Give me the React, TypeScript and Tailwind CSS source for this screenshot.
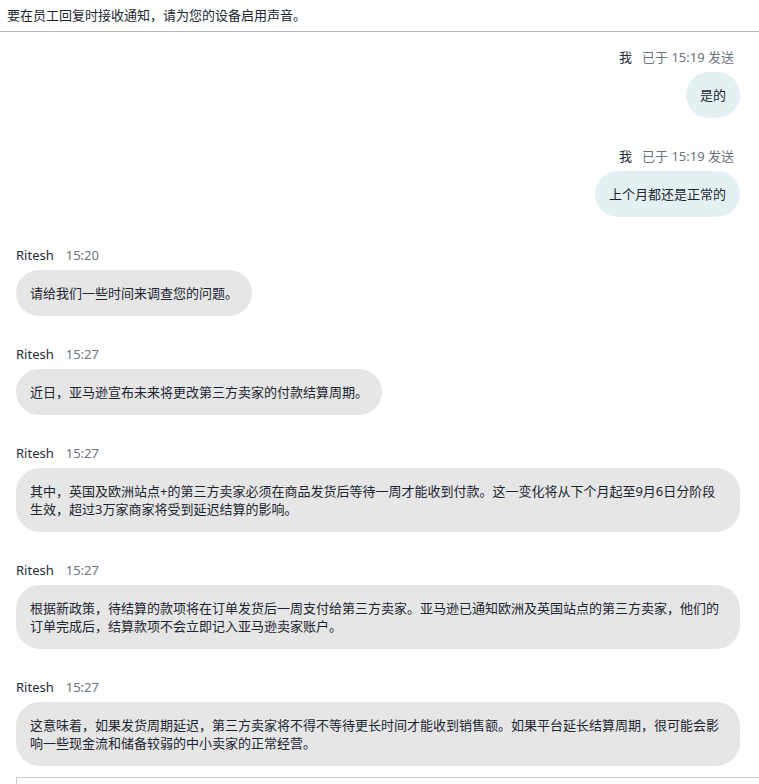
import React from 'react';

interface Message {
  from: 'me' | 'agent';
  name: string;
  time: string;
  text: string;
}

const messages: Message[] = [
  { from: 'me', name: '我', time: '已于 15:19 发送', text: '是的' },
  { from: 'me', name: '我', time: '已于 15:19 发送', text: '上个月都还是正常的' },
  { from: 'agent', name: 'Ritesh', time: '15:20', text: '请给我们一些时间来调查您的问题。' },
  { from: 'agent', name: 'Ritesh', time: '15:27', text: '近日，亚马逊宣布未来将更改第三方卖家的付款结算周期。' },
  {
    from: 'agent',
    name: 'Ritesh',
    time: '15:27',
    text: '其中，英国及欧洲站点+的第三方卖家必须在商品发货后等待一周才能收到付款。这一变化将从下个月起至9月6日分阶段生效，超过3万家商家将受到延迟结算的影响。',
  },
  {
    from: 'agent',
    name: 'Ritesh',
    time: '15:27',
    text: '根据新政策，待结算的款项将在订单发货后一周支付给第三方卖家。亚马逊已通知欧洲及英国站点的第三方卖家，他们的订单完成后，结算款项不会立即记入亚马逊卖家账户。',
  },
  {
    from: 'agent',
    name: 'Ritesh',
    time: '15:27',
    text: '这意味着，如果发货周期延迟，第三方卖家将不得不等待更长时间才能收到销售额。如果平台延长结算周期，很可能会影响一些现金流和储备较弱的中小卖家的正常经营。',
  },
];

function MessageItem({ msg }: { msg: Message }) {
  const mine = msg.from === 'me';
  return (
    <div className={mine ? 'flex flex-col items-end' : 'flex flex-col items-start'}>
      <div className={mine ? 'flex gap-[10px] leading-[20px] mr-[6px]' : 'flex gap-[12px] leading-[20px]'}>
        <span className="text-[#1f2d3d]">{msg.name}</span>
        <span className="text-[#6b7480]">{msg.time}</span>
      </div>
      <div
        className={
          mine
            ? 'mt-[5px] bg-[#e3f1f3] text-[#1c2530] px-[14px] py-[14px] leading-[18px] rounded-[24px]'
            : 'mt-[5px] bg-[#e6e6e6] text-[#1c2530] px-[14px] py-[14px] leading-[18px] rounded-[24px] max-w-full'
        }
      >
        {msg.text}
      </div>
    </div>
  );
}

export default function App() {
  return (
    <div
      className="w-[759px] h-[784px] overflow-hidden bg-white text-[13px]"
      style={{ fontFamily: '"Segoe UI", "Noto Sans", "Noto Sans CJK SC", sans-serif' }}
    >
      {/* Notice */}
      <div className="h-[32px] px-[7px] flex items-center border-b border-[#b4b9bb] text-[#1c2530]">
        要在员工回复时接收通知，请为您的设备启用声音。
      </div>

      {/* Conversation */}
      <div className="pl-[16px] pr-[19px] pt-[15px] flex flex-col gap-[28px]">
        {messages.map((m, i) => (
          <MessageItem key={i} msg={m} />
        ))}
      </div>

      {/* Input */}
      <div className="ml-[16px] mt-[11px] h-[40px] border border-[#cccccc] -mr-[4px]" />
    </div>
  );
}
